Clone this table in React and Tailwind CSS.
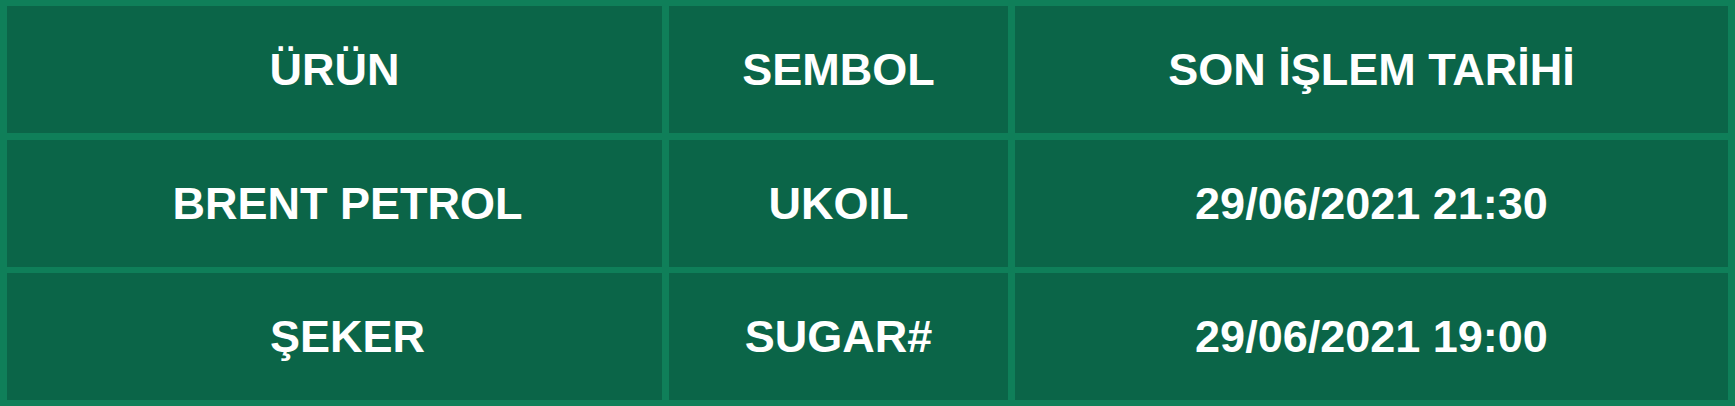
export default function App() {
  const rows = [
    ["BRENT PETROL", "UKOIL", "29/06/2021 21:30"],
    ["ŞEKER", "SUGAR#", "29/06/2021 19:00"],
  ];
  const cell =
    "bg-[#0b6548] flex items-center justify-center text-white font-bold text-[45px] leading-none whitespace-nowrap";
  return (
    <div
      className="w-[1735px] h-[406px] bg-[#0f7f59] pt-[6px] pb-[6px] px-[7px] grid grid-cols-[655px_339px_713px] grid-rows-[127px_127px_127px] gap-x-[7px] gap-y-[6.5px]"
      style={{ fontFamily: '"Liberation Sans", Arial, sans-serif' }}
    >
      <div className={cell}>ÜRÜN</div>
      <div className={cell}>SEMBOL</div>
      <div className={cell}>SON İŞLEM TARİHİ</div>
      {rows.map((r, i) => (
        <div key={i} className="contents">
          <div className={cell + " pl-[26px]"}>{r[0]}</div>
          <div className={cell}>{r[1]}</div>
          <div className={cell}>{r[2]}</div>
        </div>
      ))}
    </div>
  );
}
